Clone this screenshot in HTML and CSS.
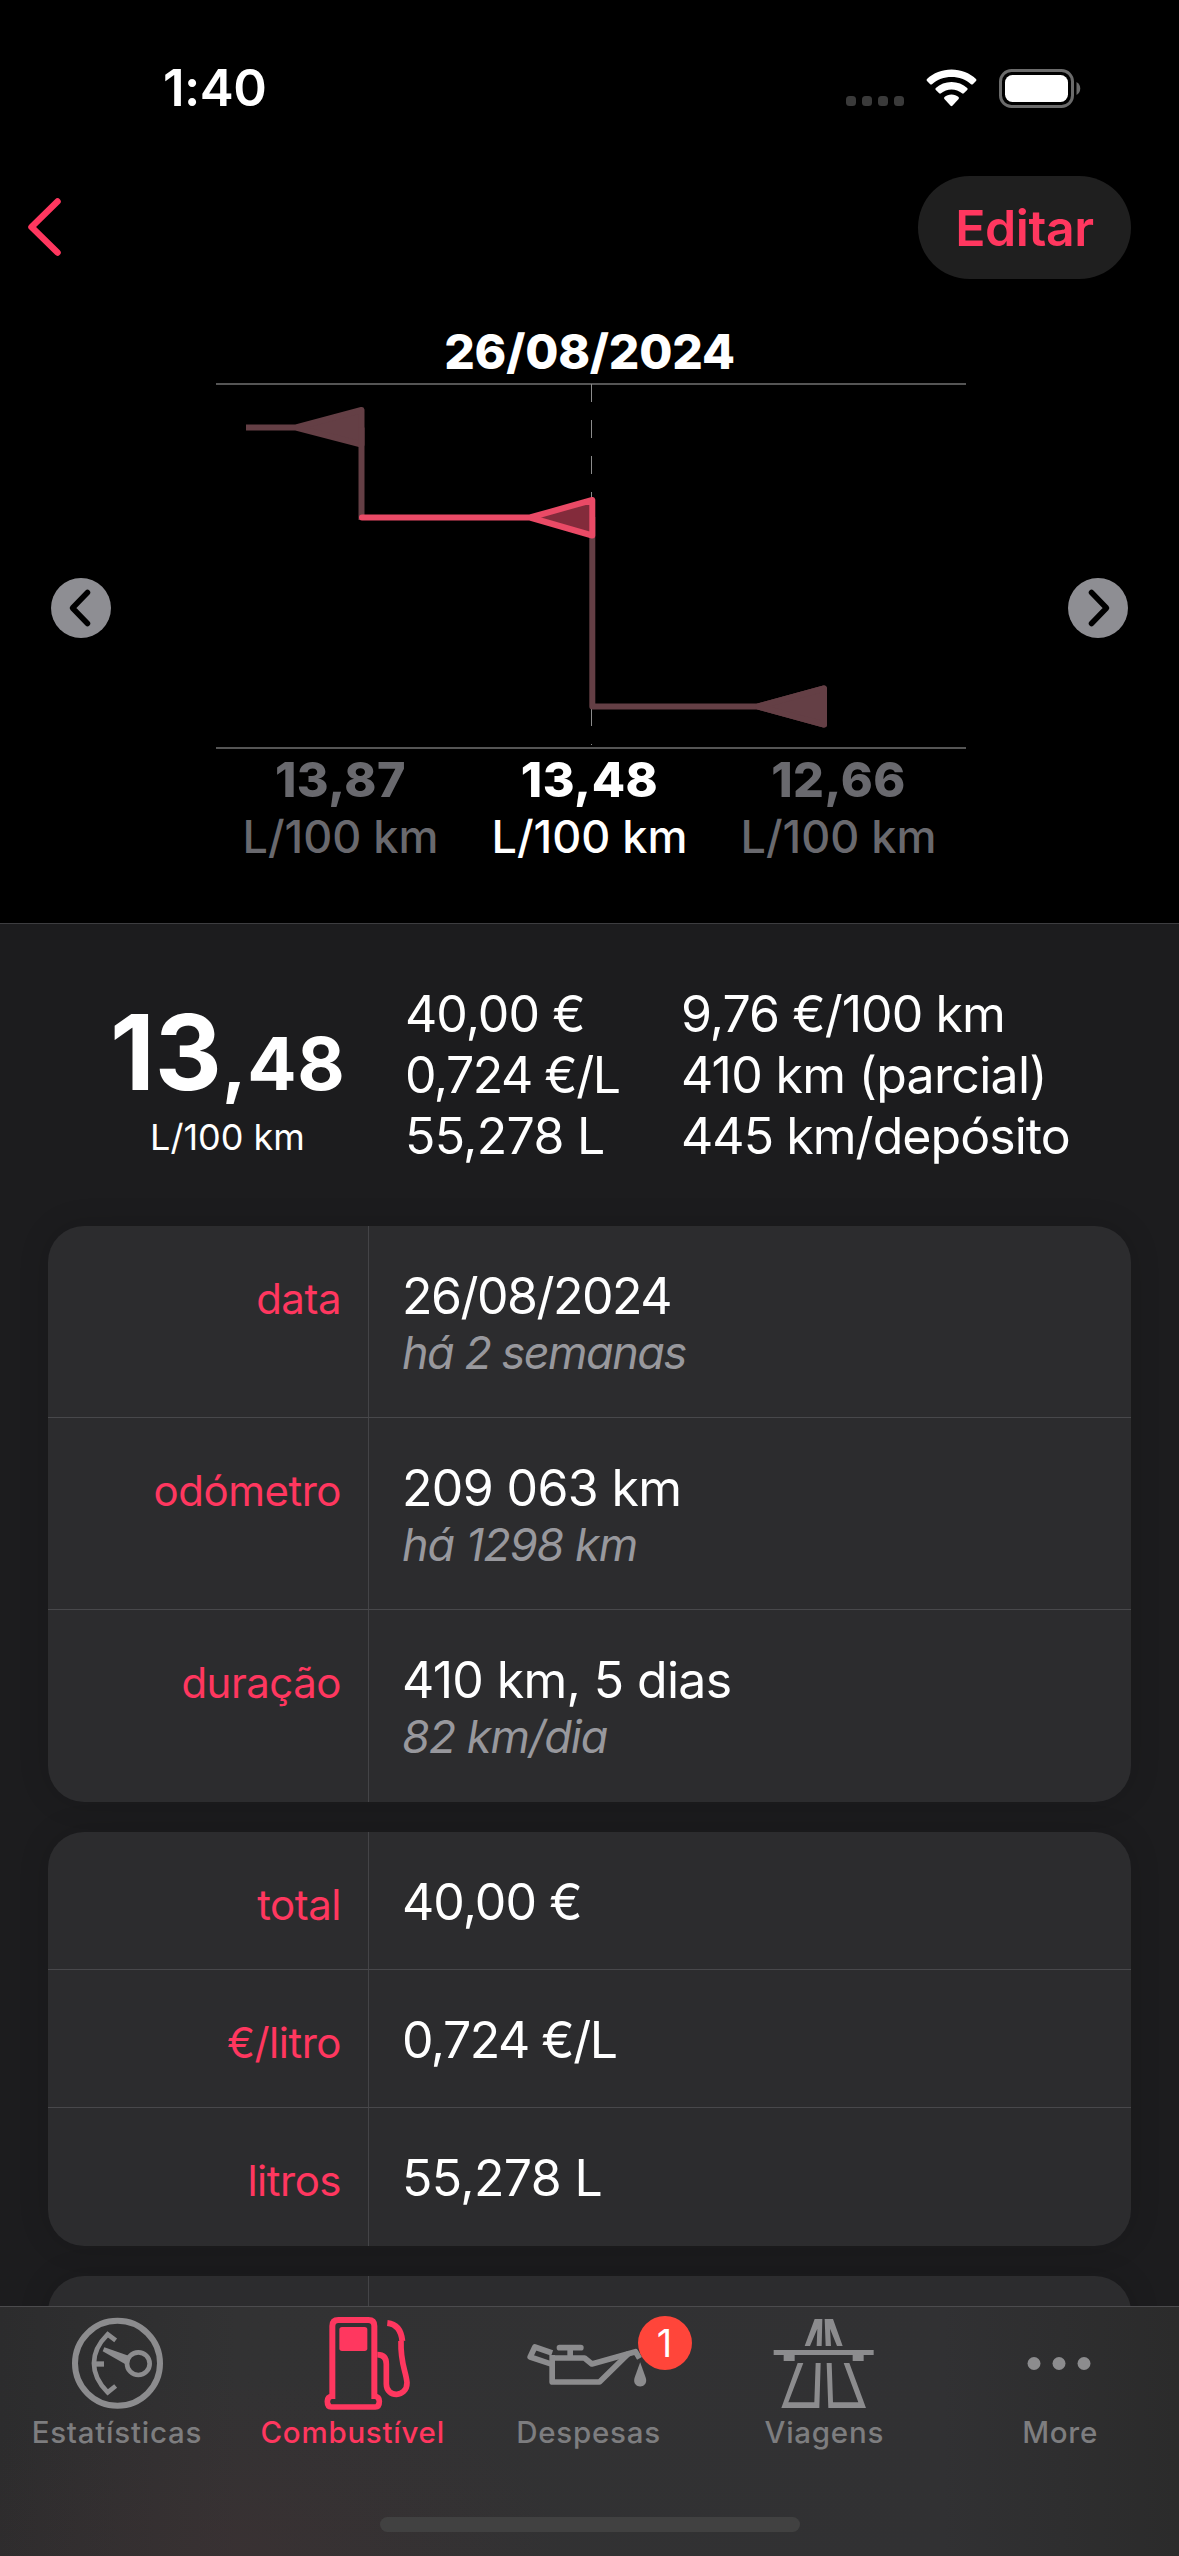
FILE: index.html
```html
<!DOCTYPE html>
<html lang="pt">
<head>
<meta charset="utf-8">
<title>Combustível</title>
<link rel="stylesheet" href="styles.css">
</head>
<body>
<div class="screen">
  <header class="status">
    <span class="time">1:40</span>
    <div class="indicators">
      <svg class="cell" width="58" height="10" viewBox="0 0 58 10"><g fill="#3a3a3a"><rect width="10" height="10" rx="3.5"/><rect x="16" width="10" height="10" rx="3.5"/><rect x="32" width="10" height="10" rx="3.5"/><rect x="48" width="10" height="10" rx="3.5"/></g></svg>
      <svg class="wifi" width="51" height="38" viewBox="0 0 51 38"><g fill="#fff"><path d="M25.500 0.500C35 0.500 43.500 4 50 10Q51 11 50 12L46.800 15.200Q46 16 45 15.200C39.500 10.500 33 8 25.500 8S11.500 10.500 6 15.200Q5 16 4.200 15.200L1 12Q0 11 1 10C7.500 4 16 0.500 25.500 0.500Z"/><path d="M25.500 13C31.500 13 37 15.200 41.200 19Q42.200 20 41.200 21L37.800 24.300Q37 25 36 24.300C33 21.800 29.500 20.400 25.500 20.400S18 21.800 15 24.300Q14 25 13.200 24.300L9.800 21Q8.800 20 9.800 19C14 15.200 19.500 13 25.500 13Z"/><path d="M25.500 25.500C28.300 25.500 30.700 26.500 32.500 28Q33.500 29 32.600 30L26.400 36.800Q25.500 37.700 24.600 36.800L18.400 30Q17.500 29 18.500 28C20.300 26.500 22.700 25.500 25.500 25.500Z"/></g></svg>
      <svg class="battery" width="82" height="39" viewBox="0 0 82 39"><rect x="1.500" y="1.500" width="72" height="36" rx="11" fill="none" stroke="#6b6b6b" stroke-width="3"/><rect x="6" y="6" width="63" height="27" rx="7.500" fill="#fff"/><path d="M77.500 13V26C82.500 23.500 82.500 15.500 77.500 13Z" fill="#6b6b6b"/></svg>
    </div>
  </header>

  <nav class="navbar">
    <svg width="34" height="60" viewBox="0 0 34 60"><path d="M29.500 3.500L3.500 29L29.500 54.500" fill="none" stroke="#ff375f" stroke-width="6.500" stroke-linecap="round" stroke-linejoin="round"/></svg>
    <button class="edit">Editar</button>
  </nav>

  <section class="chart">
    <svg class="arrow" width="60" height="60" viewBox="0 0 60 60"><circle cx="30" cy="30" r="30" fill="#8e8e93"/><path d="M36.500 14.500L21.500 30L36.500 45.500" fill="none" stroke="#000" stroke-width="5.500" stroke-linecap="round" stroke-linejoin="round"/></svg>
    <div class="plot">
      <h1 class="plot-date">26/08/2024</h1>
      <svg class="lines" width="752" height="366" viewBox="-2 0 752 366">
        <rect width="750" height="2" fill="#555"/>
        <rect y="364" width="750" height="2" fill="#555"/>
        <path d="M375.500 1V362" stroke="#8c8c8c" stroke-width="1" stroke-dasharray="18 18"/>
        <g fill="#643f45" stroke="#643f45" stroke-width="6" stroke-linejoin="round">
          <path d="M30 44.500H80L145.500 27V61.500L80 44.500"/>
          <path d="M145.500 44.500V137" fill="none"/>
          <path d="M376.300 134V323.500H542L608 305.500V341.500L542 323.500" fill="none"/>
          <path d="M542 323.500L608 305.500V341.500Z"/>
        </g>
        <path d="M146 134.500H314L376.300 117V152.500L314 134.500Z" fill="#832b3b" stroke="#ea4a66" stroke-width="6" stroke-linejoin="round" stroke-linecap="butt"/>
      </svg>
      <div class="readings">
        <div class="reading"><strong>13,87</strong><span>L/100 km</span></div>
        <div class="reading current"><strong>13,48</strong><span>L/100 km</span></div>
        <div class="reading"><strong>12,66</strong><span>L/100 km</span></div>
      </div>
    </div>
    <svg class="arrow" width="60" height="60" viewBox="0 0 60 60"><circle cx="30" cy="30" r="30" fill="#8e8e93"/><path d="M23.500 14.500L38.500 30L23.500 45.500" fill="none" stroke="#000" stroke-width="5.500" stroke-linecap="round" stroke-linejoin="round"/></svg>
  </section>

  <main class="content">
    <section class="summary">
      <div class="average"><div class="figure">13<small>,48</small></div><div class="unit">L/100 km</div></div>
      <div class="facts"><span class="snug">40,00 €</span><span class="tight">0,724 €/L</span><span>55,278 L</span></div>
      <div class="facts"><span class="snug">9,76 €/100 km</span><span>410 km (parcial)</span><span class="snug">445 km/depósito</span></div>
    </section>

    <dl class="card">
      <div class="row tall"><dt>data</dt><dd><span class="tight">26/08/2024</span><em class="tight">há 2 semanas</em></dd></div>
      <div class="row tall"><dt>odómetro</dt><dd>209 063 km<em>há 1298 km</em></dd></div>
      <div class="row tall"><dt>duração</dt><dd>410 km, 5 dias<em>82 km/dia</em></dd></div>
    </dl>
    <dl class="card">
      <div class="row"><dt>total</dt><dd><span class="snug">40,00 €</span></dd></div>
      <div class="row"><dt>€/litro</dt><dd><span class="tight">0,724 €/L</span></dd></div>
      <div class="row"><dt>litros</dt><dd>55,278 L</dd></div>
    </dl>
    <dl class="card">
      <div class="row"><dt></dt><dd></dd></div>
    </dl>
  </main>

  <footer class="tabbar">
    <div class="tabs">
      <a class="tab">
        <svg width="120" height="112" viewBox="-6 9 360 336"><g fill="none" stroke="#8c8c8e"><circle cx="172.500" cy="178" r="127.500" stroke-width="18"/><path d="M167 109L143 91C88 145 88 211 143 265L167 246" stroke-width="14"/><path d="M103 180H132" stroke-width="16"/><circle cx="235" cy="179" r="34" stroke-width="14"/></g><path d="M133 130L210 157L195 180L128 142Z" fill="#8c8c8e"/></svg>
        <span>Estatísticas</span>
      </a>
      <a class="tab active">
        <svg width="120" height="112" viewBox="-64 9 360 336"><g fill="none" stroke="#ff375f" stroke-width="18"><path d="M51 285V66Q51 48 69 48H159Q177 48 177 66V285"/><path d="M51 276Q36 278 36 292Q36 309 48 309H180Q192 309 192 292Q192 278 177 276" stroke-width="17"/><path d="M186 152Q213 152 213 180V240C213 282 275 282 275 236C272 200 255 180 257 111" stroke-width="17"/><path d="M216 57Q256 61 261 111"/></g><rect x="72" y="69" width="84" height="72" rx="8" fill="#ff375f"/></svg>
        <span>Combustível</span>
      </a>
      <a class="tab">
        <svg width="180" height="112" viewBox="-61.500 9 540 336"><g fill="none" stroke="#8c8c8e" stroke-width="17" stroke-linejoin="round"><path d="M98 153V234H240L328 148"/><path d="M94 162H195L217 180L348 143L360 163"/><path d="M98 181L32 159L46 129L98 147"/><path d="M120 131H184" stroke-linecap="round"/><path d="M152 135V160"/></g><path d="M362 175L379 222C388 256 336 256 345 222Z" fill="#8c8c8e"/></svg>
        <b class="badge">1</b>
        <span>Despesas</span>
      </a>
      <a class="tab">
        <svg width="120" height="112" viewBox="1 9 360 336"><g fill="#8c8c8e"><path d="M150 45H173L171 126H156L158 74L136 126H120ZM180 45H205L234 126H217L196 74L199 126H183ZM27 138H327V153H297V171H264V153H90V171H57V153H27Z"/><path fill-rule="evenodd" d="M99 177H116L71 295H149L153 177H168L164 312H50ZM186 177H201L205 295H281L237 177H254L304 312H191Z"/></g></svg>
        <span>Viagens</span>
      </a>
      <a class="tab">
        <svg width="120" height="112" viewBox="0 0 120 112"><g fill="#8c8c8e"><circle cx="33" cy="56.500" r="6.500"/><circle cx="58" cy="56.500" r="6.500"/><circle cx="83" cy="56.500" r="6.500"/></g></svg>
        <span>More</span>
      </a>
    </div>
    <div class="home"></div>
  </footer>
</div>
</body>
</html>
```
FILE: styles.css
```css
* { box-sizing: border-box; margin: 0; padding: 0; }
body {
  background: #000;
  color: #fff;
  font-family: Inter, "Liberation Sans", sans-serif;
  font-size: 50px;
  white-space: nowrap;
}
svg { display: block; flex: none; }
.screen { width: 1179px; height: 2556px; display: flex; flex-direction: column; overflow: hidden; }

.status { height: 176px; flex: none; display: flex; align-items: center; justify-content: space-between; padding: 0 98px 0 163px; }
.time { font-weight: 600; font-size: 51px; letter-spacing: -0.5px; padding-bottom: 1px; }
.indicators { display: flex; align-items: center; gap: 22px; }
.cell { align-self: flex-end; margin-bottom: 2px; }

.navbar { height: 103px; flex: none; display: flex; align-items: center; justify-content: space-between; padding: 0 48px 0 28px; }
.edit { width: 213px; height: 103px; border: 0; border-radius: 52px; background: #1f1f1f; color: #ff375f; font: 600 50px Inter, sans-serif; letter-spacing: -0.4px; }

.chart { height: 645px; flex: none; display: flex; align-items: flex-start; justify-content: space-between; padding: 45px 51px 0; border-bottom: 1px solid #3d3d40; }
.arrow { margin-top: 254px; }
.plot { width: 752px; }
.plot-date { font-size: 48px; line-height: 56px; font-weight: 800; letter-spacing: -0.2px; text-align: center; }
.lines { margin-top: 3px; }
.readings { display: grid; grid-template-columns: repeat(3, 249px); justify-content: center; }
.reading { display: flex; flex-direction: column; align-items: center; color: #69696e; }
.reading.current { color: #fff; }
.reading strong { font-size: 48.5px; line-height: 62px; font-weight: 800; letter-spacing: 0.5px; }
.reading span { font-size: 45px; line-height: 52px; font-weight: 500; }

.content { flex: 1; min-height: 0; overflow: hidden; background: #1c1c1e; }
.summary { height: 302px; display: grid; grid-template-columns: 295px 276px 1fr; padding: 60px 0 0 110px; }
.average { display: flex; flex-direction: column; width: 235px; }
.figure { font-size: 104px; line-height: 136px; height: 136px; font-weight: 700; }
.figure small { font-size: 73px; letter-spacing: 0.8px; }
.unit { font-size: 36px; line-height: 34px; text-align: center; }
.facts { display: flex; flex-direction: column; line-height: 61px; letter-spacing: -0.7px; }

.card { margin: 0 48px 30px; background: #2c2c2e; border-radius: 36px; box-shadow: 0 0 30px rgba(0, 0, 0, .15); overflow: hidden; }
.row { height: 138px; display: grid; grid-template-columns: 320px 1fr; border-bottom: 1px solid #48484b; }
.row.tall { height: 192px; }
.row:last-child { border-bottom: 0; }
dt { padding: 44px 27px 0 0; text-align: right; color: #ff375f; font-size: 42px; line-height: 58px; letter-spacing: -0.5px; }
dd { padding: 41px 0 0 33px; border-left: 1px solid #444447; font-size: 50px; line-height: 58px; letter-spacing: -0.65px; }
dd em { display: block; font-size: 45px; line-height: 56px; color: #98989d; letter-spacing: -1px; }
.snug { letter-spacing: -0.95px; }
.tight { letter-spacing: -1.5px; }

.tabbar { height: 250px; flex: none; border-top: 1px solid #4b4b4d; background: radial-gradient(320px 170px at 240px 240px, rgba(66, 48, 50, .4), rgba(66, 48, 50, 0)), linear-gradient(90deg, #2c2c2d, #323233 20%, #313133 80%, #2b2b2b); }
.tabs { display: grid; grid-template-columns: repeat(5, 1fr); height: 210px; }
.tab { position: relative; display: flex; flex-direction: column; align-items: center; color: #7d7d7f; }
.tab span { margin-right: 2px; font-size: 29.5px; line-height: 26px; font-weight: 450; letter-spacing: 0.75px; }
.tab.active { color: #ff375f; }
.badge { position: absolute; left: 166px; top: 9px; width: 54px; height: 54px; border-radius: 50%; background: #ff453a; color: #fff; font-size: 38px; line-height: 54px; font-weight: 400; text-align: center; }
.home { width: 420px; height: 15px; margin: 0 auto; border-radius: 8px; background: #414141; }
```
